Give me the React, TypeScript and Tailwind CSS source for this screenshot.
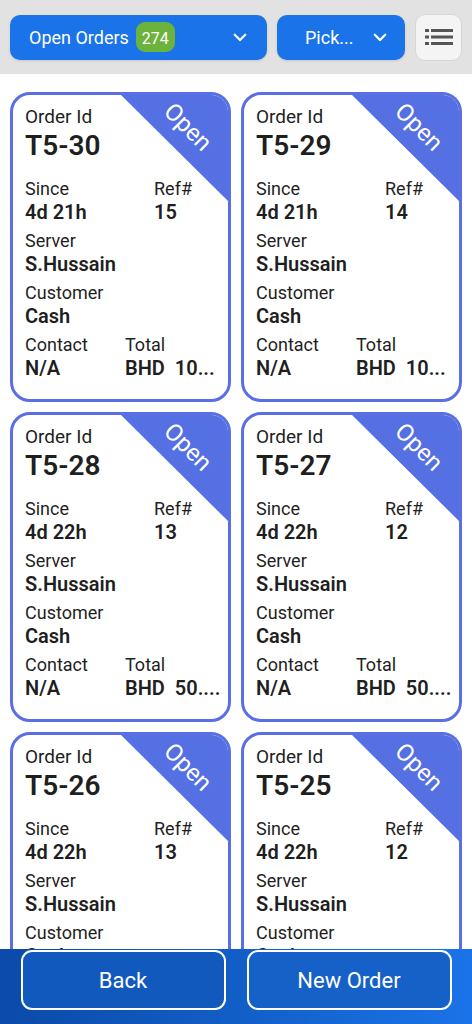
import React from "react";

type Order = { id: string; since: string; ref: string; total: string };

const orders: Order[] = [
  { id: "T5-30", since: "4d 21h", ref: "15", total: "BHD  10..." },
  { id: "T5-29", since: "4d 21h", ref: "14", total: "BHD  10..." },
  { id: "T5-28", since: "4d 22h", ref: "13", total: "BHD  50...." },
  { id: "T5-27", since: "4d 22h", ref: "12", total: "BHD  50...." },
  { id: "T5-26", since: "4d 22h", ref: "13", total: "BHD  50...." },
  { id: "T5-25", since: "4d 22h", ref: "12", total: "BHD  50...." },
];

function Chevron() {
  return (
    <svg width="18" height="18" viewBox="0 0 24 24" fill="none" stroke="white" strokeWidth="3" strokeLinecap="round" strokeLinejoin="round">
      <path d="M5 9l7 7 7-7" />
    </svg>
  );
}

function Card({ o }: { o: Order }) {
  return (
    <div className="relative h-[310px] rounded-[20px] border-[3px] border-[#5a6fe3] bg-white overflow-hidden text-[#1f1f1f]">
      <div className="absolute right-0 top-0 w-[107px] h-[106px] bg-[#5470e2] [clip-path:polygon(0_0,100%_0,100%_100%)]" />
      <div className="absolute right-[2px] top-[20px] w-[76px] text-center text-white text-[24px] leading-none rotate-45">Open</div>
      <div className="relative pl-[12px] pt-[10px]">
        <div className="text-[19px] leading-[24px]">Order Id</div>
        <div className="text-[28px] leading-[34px] font-semibold">{o.id}</div>
        <div className="flex mt-[15px]">
          <div className="w-[129px]">
            <div className="text-[18px] leading-[22px]">Since</div>
            <div className="text-[20px] leading-[24px] font-semibold">{o.since}</div>
          </div>
          <div>
            <div className="text-[18px] leading-[22px]">Ref#</div>
            <div className="text-[20px] leading-[24px] font-semibold">{o.ref}</div>
          </div>
        </div>
        <div className="mt-[6px]">
          <div className="text-[18px] leading-[22px]">Server</div>
          <div className="text-[20px] leading-[24px] font-semibold">S.Hussain</div>
        </div>
        <div className="mt-[6px]">
          <div className="text-[18px] leading-[22px]">Customer</div>
          <div className="text-[20px] leading-[24px] font-semibold">Cash</div>
        </div>
        <div className="flex mt-[6px]">
          <div className="w-[100px]">
            <div className="text-[18px] leading-[22px]">Contact</div>
            <div className="text-[20px] leading-[24px] font-semibold">N/A</div>
          </div>
          <div>
            <div className="text-[18px] leading-[22px]">Total</div>
            <div className="text-[20px] leading-[24px] font-semibold whitespace-pre">{o.total}</div>
          </div>
        </div>
      </div>
    </div>
  );
}

export default function App() {
  return (
    <div className="w-[472px] h-[1024px] flex flex-col bg-white overflow-hidden" style={{ fontFamily: "Roboto, 'Noto Sans', sans-serif" }}>
      <div className="h-[74px] shrink-0 bg-[#e2e2e2] flex items-center gap-[10px] pl-[10px] pr-[10px]">
        <div className="w-[257px] h-[45px] rounded-[10px] bg-[#1a73e8] flex items-center pl-[19px] pr-[18px] text-white shadow-sm">
          <span className="text-[18px]">Open Orders</span>
          <span className="ml-[7px] h-[30px] px-[6px] rounded-[9px] bg-[#6cb33e] flex items-center text-[16px] pt-[3px]">274</span>
          <span className="ml-auto flex"><Chevron /></span>
        </div>
        <div className="w-[128px] h-[45px] rounded-[10px] bg-[#1a73e8] flex items-center pl-[28px] pr-[16px] text-white shadow-sm">
          <span className="text-[18px]">Pick...</span>
          <span className="ml-auto flex"><Chevron /></span>
        </div>
        <div className="w-[47px] h-[47px] rounded-[10px] bg-[#f4f4f4] border border-[#d6d6d6] flex items-center justify-center">
          <svg width="28" height="20" viewBox="0 0 28 20" fill="#555">
            <rect x="0" y="2" width="4" height="3" />
            <rect x="6" y="2" width="22" height="3" />
            <rect x="0" y="8.5" width="4" height="3" />
            <rect x="6" y="8.5" width="22" height="3" />
            <rect x="0" y="15" width="4" height="3" />
            <rect x="6" y="15" width="22" height="3" />
          </svg>
        </div>
      </div>
      <div className="flex-1 overflow-hidden px-[10px] pt-[18px]">
        <div className="grid grid-cols-2 gap-x-[10px] gap-y-[10px]">
          {orders.map((o) => (
            <Card key={o.id} o={o} />
          ))}
        </div>
      </div>
      <div className="h-[75px] shrink-0 bg-gradient-to-r from-[#0b4aa8] to-[#1a73e8] flex items-start justify-center gap-[21px] pt-[1px]">
        <div className="w-[205px] h-[60px] rounded-[11px] border-[2.5px] border-white bg-[#1259bd] flex items-center justify-center text-white text-[22px]">Back</div>
        <div className="w-[205px] h-[60px] rounded-[11px] border-[2.5px] border-white bg-[#1661c8] flex items-center justify-center text-white text-[22px]">New Order</div>
      </div>
    </div>
  );
}
